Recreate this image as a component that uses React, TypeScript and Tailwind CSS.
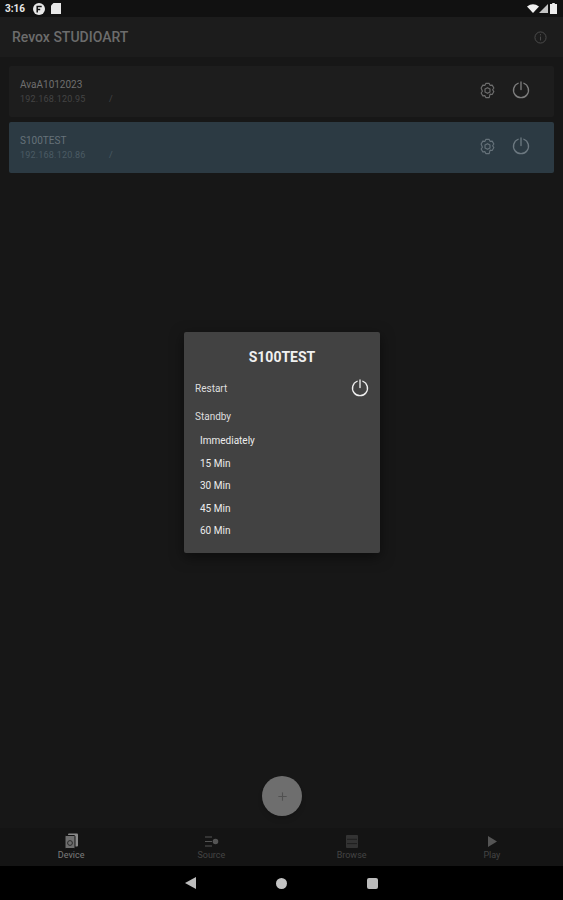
import { Plus } from 'lucide-react';

const PowerIcon = ({ size = 20, color = '#8a8a8a' }: { size?: number; color?: string }) => (
  <svg width={size} height={size} viewBox="0 0 24 24" fill="none" stroke={color} strokeWidth="1.8" strokeLinecap="round">
    <path d="M8.2 3a10 10 0 1 0 7.6 0" />
    <path d="M12 1.2v10.2" />
  </svg>
);

const GearIcon = ({ color = '#6e6e6e' }: { color?: string }) => (
  <svg width="17" height="17" viewBox="0 0 24 24" fill="none" stroke={color} strokeWidth="1.6" strokeLinejoin="round">
    <path d="M9.6 2h4.8l1.2 2.8 3-.4 2.4 4.1-1.8 2.5 1.8 2.5-2.4 4.1-3-.4L14.4 22H9.6l-1.2-2.8-3 .4L3 15.5l1.8-2.5L3 8.5l2.4-4.1 3 .4z" />
    <path d="M12 8l3.5 2v4L12 16l-3.5-2v-4z" />
  </svg>
);

const DeviceRow = ({ name, ip, active }: { name: string; ip: string; active?: boolean }) => (
  <div className={`flex h-[51px] items-center rounded-[2px] pl-[11px] pr-[24px] ${active ? 'bg-[#2c3a43]' : 'bg-[#1d1d1d]'}`}>
    <div className="flex-1">
      <div className={`text-[10px] leading-[13px] ${active ? 'text-[#66727a]' : 'text-[#6f6f6f]'}`}>{name}</div>
      <div className={`mt-[2px] flex text-[9px] leading-[12px] tracking-[0.2px] ${active ? 'text-[#4b5a63]' : 'text-[#444444]'}`}>
        <span className="w-[89px]">{ip}</span>
        <span>/</span>
      </div>
    </div>
    <div className="mb-[3px] flex items-center gap-[16px]">
      <GearIcon color={active ? '#66727a' : '#6e6e6e'} />
      <PowerIcon size={18} color={active ? '#6c7880' : '#7e7e7e'} />
    </div>
  </div>
);

const NavItem = ({ label, icon, active }: { label: string; icon: React.ReactNode; active?: boolean }) => (
  <div className="flex flex-1 flex-col items-center">
    <div className="flex h-[16px] items-center justify-center">{icon}</div>
    <div className={`mt-[1px] text-[9px] leading-[11px] ${active ? 'text-[#7d7d7d]' : 'text-[#444444]'}`}>{label}</div>
  </div>
);

export default function App() {
  return (
    <div className="relative flex h-[900px] w-[563px] flex-col overflow-hidden bg-[#171717] font-['Roboto',sans-serif]">
      {/* status bar */}
      <div className="flex h-[17px] items-center justify-between bg-[#111111] pl-[5px] pr-[6px]">
        <div className="flex items-center">
          <span className="w-[28px] text-[10px] font-bold leading-none text-[#e8e8e8]">3:16</span>
          <svg width="12" height="12" viewBox="0 0 12 12">
            <circle cx="6" cy="6" r="6" fill="#e8e8e8" />
            <path d="M4.2 9.5V3.5h4.5M4.2 6.5h3" stroke="#111111" strokeWidth="1.5" fill="none" />
          </svg>
          <svg width="10" height="11" viewBox="0 0 10 11" className="ml-[6px]">
            <path d="M2.5 0H10v11H0V2.5z" fill="#e8e8e8" />
          </svg>
        </div>
        <div className="flex items-center">
          <svg width="12" height="9" viewBox="0 0 12 9">
            <path d="M0 2.4Q6-2 12 2.4L6 9z" fill="#f0f0f0" />
          </svg>
          <svg width="9" height="9" viewBox="0 0 9 9">
            <path d="M9 0v9H0z" fill="#c4c4c4" />
          </svg>
          <svg width="7" height="11" viewBox="0 0 7 11" className="ml-[2px]">
            <path d="M2.2 0h2.6v1H7v10H0V1h2.2z" fill="#ececec" />
          </svg>
        </div>
      </div>

      {/* app bar */}
      <div className="flex h-[40px] items-center justify-between bg-[#1c1c1c] pl-[12px] pr-[16px]">
        <span className="text-[14px] font-medium text-[#6c6c6c]">Revox STUDIOART</span>
        <svg width="13" height="13" viewBox="0 0 14 14" fill="none" stroke="#4f4f4f" strokeWidth="1">
          <circle cx="7" cy="7" r="6" />
          <path d="M7 6v4.2M7 3.4v1.3" />
        </svg>
      </div>

      {/* device list */}
      <div className="flex flex-1 flex-col gap-[5px] px-[9px] pt-[9px]">
        <DeviceRow name="AvaA1012023" ip="192.168.120.95" />
        <DeviceRow name="S100TEST" ip="192.168.120.86" active />
      </div>

      {/* bottom nav */}
      <div className="flex h-[38px] items-center bg-[#141414] px-[1px]">
        <NavItem
          label="Device"
          active
          icon={
            <svg width="15" height="16" viewBox="0 0 15 16" fill="none">
              <rect x="4" y="0.5" width="10" height="13" rx="1" fill="#8a8a8a" />
              <rect x="1" y="2.5" width="10" height="13" rx="1" fill="#6f6f6f" stroke="#141414" />
              <circle cx="6" cy="10" r="2.4" stroke="#2a2a2a" />
            </svg>
          }
        />
        <NavItem
          label="Source"
          icon={
            <svg width="15" height="13" viewBox="0 0 15 13" fill="none" stroke="#555555" strokeWidth="1.2">
              <path d="M1 2h7M1 6.5h7M1 11h7" />
              <circle cx="11.5" cy="6.5" r="2.2" fill="#555555" />
            </svg>
          }
        />
        <NavItem
          label="Browse"
          icon={
            <svg width="12" height="13" viewBox="0 0 12 13">
              <rect width="12" height="13" rx="1" fill="#333333" />
              <path d="M1 4.3h10M1 8.6h10" stroke="#1e1e1e" />
            </svg>
          }
        />
        <NavItem
          label="Play"
          icon={
            <svg width="10" height="11" viewBox="0 0 10 11">
              <path d="M1 0l9 5.5L1 11z" fill="#555555" />
            </svg>
          }
        />
      </div>

      {/* android nav */}
      <div className="flex h-[34px] items-center justify-center gap-[80px] bg-black">
        <svg width="11" height="12" viewBox="0 0 11 12">
          <path d="M11 0v12L0 6z" fill="#bcbcbc" />
        </svg>
        <span className="h-[11px] w-[11px] rounded-full bg-[#c4c4c4]" />
        <span className="h-[11px] w-[11px] rounded-[2px] bg-[#bcbcbc]" />
      </div>

      {/* add button */}
      <div className="absolute left-[262px] top-[776px] flex h-[40px] w-[40px] items-center justify-center rounded-full bg-[#6e6e6e] shadow-md">
        <Plus size={13} color="#515151" strokeWidth={2} />
      </div>

      {/* standby dialog */}
      <div className="absolute left-[184px] top-[332px] h-[221px] w-[196px] rounded-[2px] bg-[#424242] px-[11px] shadow-[0_4px_14px_rgba(0,0,0,0.5)]">
        <div className="pt-[16px] text-center text-[14px] font-bold leading-[18px] text-[#f0f0f0]">S100TEST</div>
        <div className="mt-[10px] flex h-[24px] items-center justify-between">
          <span className="text-[10px] text-[#dedede]">Restart</span>
          <PowerIcon size={18} color="#eeeeee" />
        </div>
        <div className="mt-[10px] text-[10px] leading-[13px] text-[#dedede]">Standby</div>
        <div className="mt-[11px] flex flex-col gap-[9.5px] pl-[5px] text-[10px] leading-[13px] text-[#ececec]">
          <span>Immediately</span>
          <span>15 Min</span>
          <span>30 Min</span>
          <span>45 Min</span>
          <span>60 Min</span>
        </div>
      </div>
    </div>
  );
}
